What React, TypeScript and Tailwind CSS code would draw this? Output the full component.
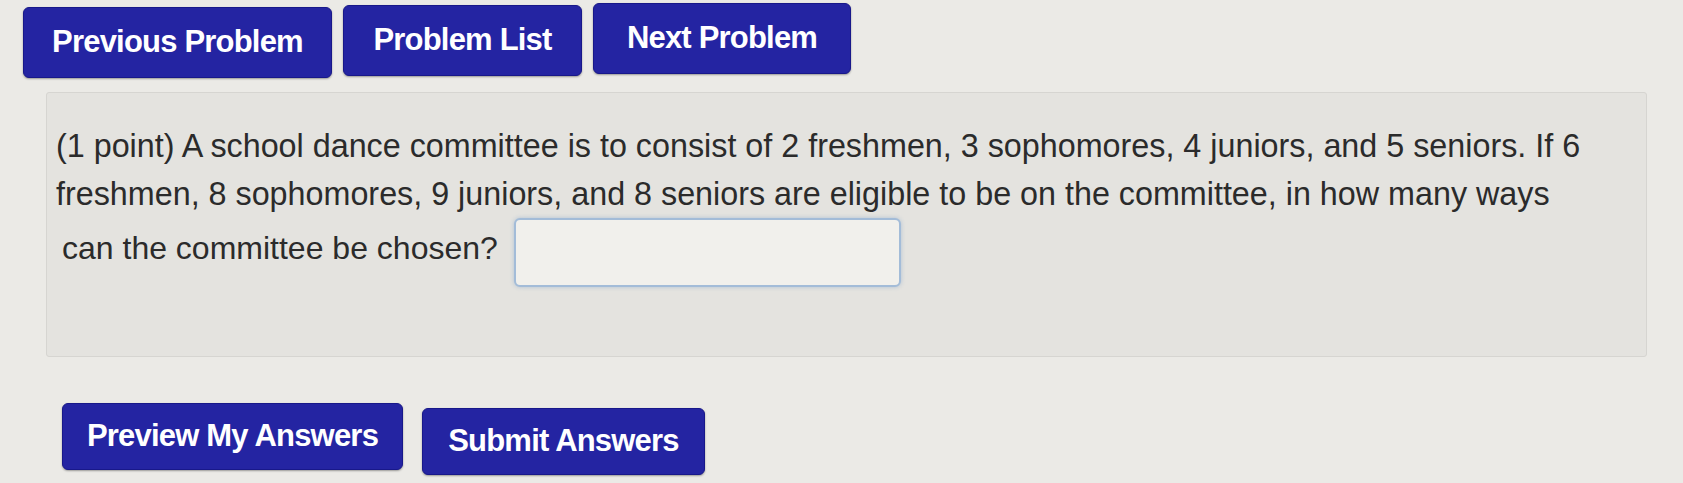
import React from "react";

const btn =
  "flex items-center justify-center rounded-[6px] bg-[#2424a2] border border-[#18188a] text-white font-bold text-[31px] tracking-[-0.8px] shadow-[0_1px_2px_rgba(0,0,0,0.35)] whitespace-nowrap";

export default function App() {
  return (
    <div
      className="w-full h-[483px] overflow-hidden bg-[#ebeae6] text-[#2b2b2b]"
      style={{ fontFamily: '"Liberation Sans", Arial, sans-serif' }}
    >
      <div className="flex items-start gap-[11px] pl-[23px]">
        <button className={`${btn} w-[309px] h-[71px] mt-[7px]`}>Previous Problem</button>
        <button className={`${btn} w-[239px] h-[71px] mt-[5px]`}>Problem List</button>
        <button className={`${btn} w-[258px] h-[71px] mt-[3px]`}>Next Problem</button>
      </div>

      <div className="ml-[46px] mt-[14px] w-[1601px] h-[265px] rounded-[3px] border border-[#d6d5d1] bg-[#e4e3df] pl-[9px] pt-[29px]">
        <div className="text-[32.3px] leading-[48px] whitespace-nowrap">
          (1 point) A school dance committee is to consist of 2 freshmen, 3 sophomores, 4 juniors, and 5 seniors. If 6
        </div>
        <div className="text-[32.3px] leading-[48px] whitespace-nowrap">
          freshmen, 8 sophomores, 9 juniors, and 8 seniors are eligible to be on the committee, in how many ways
        </div>
        <div className="flex items-start pl-[6px]">
          <span className="text-[32px] leading-[48px] whitespace-nowrap mt-[6px]">can the committee be chosen?</span>
          <div className="ml-[16px] w-[387px] h-[69px] rounded-[6px] border-2 border-[#a3bcd8] bg-[#f1f0ec] shadow-[0_0_4px_rgba(110,150,200,0.45)]" />
        </div>
      </div>

      <div className="flex items-start gap-[19px] pl-[62px] mt-[46px]">
        <button className={`${btn} w-[341px] h-[67px]`}>Preview My Answers</button>
        <button className={`${btn} w-[283px] h-[67px] mt-[5px]`}>Submit Answers</button>
      </div>
    </div>
  );
}
